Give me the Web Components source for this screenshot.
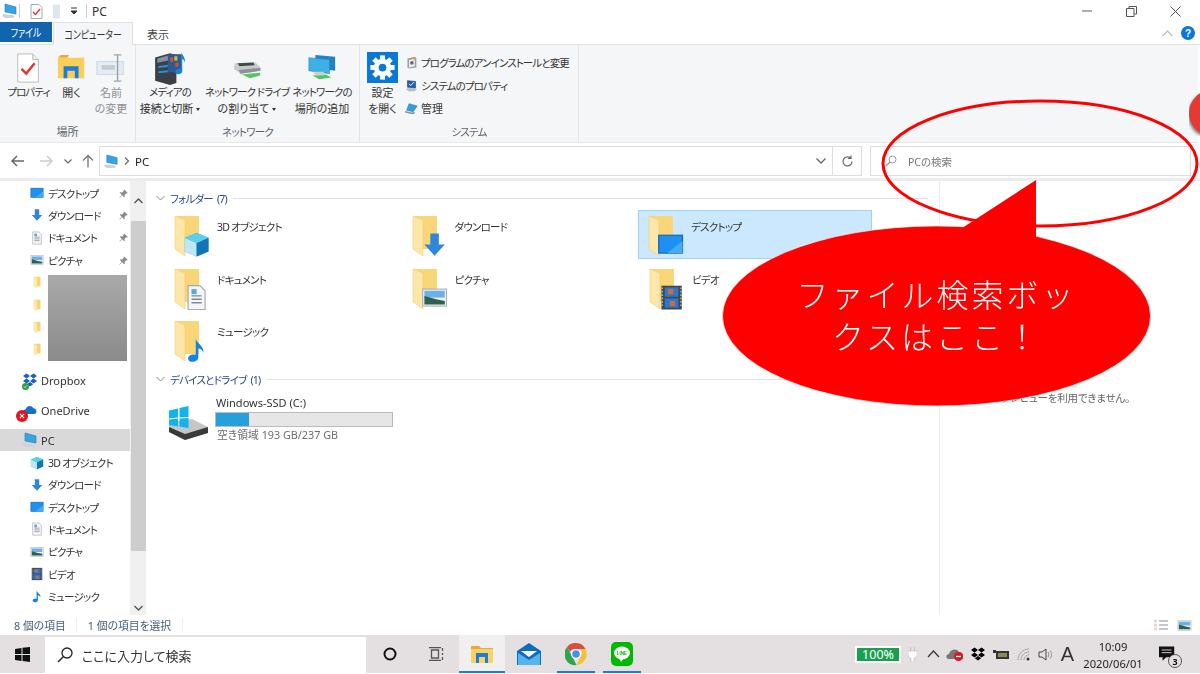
<!DOCTYPE html>
<html lang="ja">
<head>
<meta charset="utf-8">
<title>PC</title>
<style>
  html, body { margin: 0; height: 674px; overflow: hidden; background: #fff; }
  body {
    font-family: "Noto Sans", "Noto Sans CJK JP", sans-serif;
    font-size: 11.5px;
    color: #222;
    font-feature-settings: "palt";
  }
</style>
</head>
<body>
<explorer-app></explorer-app>
<script>
/* Katakana runs much narrower in the original UI font, so squeeze those lines */
const tight = (text, ls = -0.75) => /[ァ-ヶ]/.test(text) ? `font-size:10.5px;letter-spacing:${ls}px` : '';

/* Icon drawings. Small ones use a 16x16 box. */
const gear = () => {
  let teeth = '';
  for (let a = 0; a < 360; a += 45) {
    teeth += `<rect x="13.5" y="3.5" width="5" height="6" fill="#fff" transform="rotate(${a} 16 16)"/>`;
  }
  return `<rect width="32" height="32" fill="#0a78d7"/>${teeth}<circle cx="16" cy="16" r="6.5" fill="none" stroke="#fff" stroke-width="5"/>`;
};

const ICONS = {
  pc: '<path d="M3 1l11 3v7L3 9z" fill="#35a4e6" stroke="#2478b0" stroke-width=".6"/><path d="M1 11l9 1 3 1-2 2H3l-3-2z" fill="#cfd3d6"/>',
  desktop: '<rect x="1" y="2.5" width="14" height="10.5" fill="#1e90f0" stroke="#1467b8" stroke-width=".7"/><path d="M6 13l9-7v7z" fill="#46abf6"/>',
  download: '<path d="M5.5 1.5h5V8H14l-6 6.5L2 8h3.5z" fill="#2f86dc"/>',
  doc: '<path d="M3 1h7l3 3v11H3z" fill="#f4f5f7" stroke="#a7abb0" stroke-width=".7"/><path d="M5 7h6M5 9h6M5 11h6" stroke="#7f8a96" stroke-width=".8"/><path d="M5 3h3v3H5z" fill="#5ba6e0"/>',
  picture: '<rect x="1" y="3" width="14" height="10" fill="#eef1f3" stroke="#a8adb2" stroke-width=".6"/><rect x="2" y="4" width="12" height="4" fill="#6cb2e8"/><path d="M2 7l7 2 5 1v2H2z" fill="#2f5f50"/>',
  video: '<rect x="2" y="1" width="12" height="14" fill="#45484b"/><rect x="4" y="2" width="8" height="5.5" fill="#2a78d0"/><rect x="4" y="8.5" width="8" height="5.5" fill="#2a78d0"/><path d="M6 3h3v3H6zM7 10h3v3H7z" fill="#d6693a"/><path d="M2.5 2v12M13.5 2v12" stroke="#bbb" stroke-width=".8" stroke-dasharray="1 1"/>',
  music: '<path d="M7.5 1.5C8 4.500 12.500 5.500 12 10 11.500 8 10 7.500 9 7.200V12.500c0 1.600-1.600 2.700-3.400 2.700C4 15.200 3 14.300 3 13.200 3 11.700 5 10.700 7.500 11z" fill="#1583e0"/>',
  cube: '<path d="M8 1l7 3v8l-7 3-7-3V4z" fill="#27b5d9"/><path d="M1 4l7 3v8l-7-3z" fill="#bfe6f4"/><path d="M8 7l7-3v8l-7 3z" fill="#1173b8"/><path d="M8 1l7 3-7 3-7-3z" fill="#5cd0ea"/>',
  folder: '<path d="M5 2h7v11H5z" fill="#f8d374"/><path d="M4 2l4 1.500V15l-4-2z" fill="#fde9ae"/>',
  dropbox: '<path d="M4.500 1.500L8 4 4.500 6.500 1 4zM11.500 1.500L15 4l-3.500 2.500L8 4zM4.500 6.500L8 9l-3.500 2.500L1 9zM11.500 6.500L15 9l-3.500 2.500L8 9zM4.800 12.200L8 10l3.200 2.200L8 14.500z" fill="#1462c4"/>',
  onedrive: '<path d="M4 12c-3.500 0-3.500-4.500-.3-4.800C4.800 3 10 3 11.300 6.300c3.500-.3 4.700 5.700.7 5.700z" fill="#1174c9"/>',
  pin: '<path d="M9 2l5 5-1 1-1-.5-2.500 2.500.5 2.500-1 1-3-3L2.500 14 2 13.500 5.500 10l-3-3 1-1 2.500.5L8.500 4 8 3z" fill="#8b8b8b"/>',
  uninstall: '<path d="M3 3l9-2 2 2v11l-9 1.500L3 14z" fill="#9aa0a6"/><path d="M5 5l7-1.500v9L5 14z" fill="#eef0f2"/><circle cx="8.500" cy="8.500" r="2.200" fill="#5a6b7b"/><path d="M10 1.500h3v3h-3z" fill="#d9a441"/>',
  sysprops: '<path d="M1 12l5-1 9 1-3 3H4z" fill="#b9bdc2"/><path d="M3 2l10 1v8L3 10z" fill="#1d5fb0" stroke="#233a5c" stroke-width=".7"/><path d="M5 6l2 2 4-4" fill="none" stroke="#fff" stroke-width="1.200"/>',
  manage: '<path d="M5 2l10 3-5 7-8-2z" fill="#2e9de2" stroke="#1c6a9e" stroke-width=".6"/><path d="M0 11l9 2 3-1v2l-3 1-9-2z" fill="#8f9398"/>'
};

const BIG_ICONS = {
  props: '<path d="M4 1h16l6 6v24H4z" fill="#fff" stroke="#b9b9b9"/><path d="M20 1v6h6" fill="#eee" stroke="#b9b9b9"/><path d="M8 17l5 5 9-11" fill="none" stroke="#e3362c" stroke-width="2.600"/>',
  open: '<path d="M1 5h10l2-3H4z" fill="#e8a93a"/><path d="M1 5h28v22H1z" fill="#fbce5c"/><path d="M7 14h16v13h-4v-8h-8v8H7z" fill="#1c7fd6"/>',
  rename: '<rect x="1" y="9" width="28" height="14" fill="#e4edf5" stroke="#ccd5dd"/><path d="M6 13h14v5H6z" fill="#c5ccd3"/><path d="M19 2h8M19 30h8M23 2v28" stroke="#9aa2a9" stroke-width="1.500" fill="none"/>',
  media: '<path d="M2 6l14-4 6 2v26l-6 2-14-4z" fill="#3b3f46"/><path d="M4 7l11-3v5L4 11z" fill="#8391a0"/><path d="M5 14l9-1v2l-9 1zM5 19l9-1v2l-9 1z" fill="#2d8fd8"/><rect x="14" y="3" width="13" height="17" fill="#2c5b92"/><path d="M16 6h3v4h-3zM21 11h3v4h-3z" fill="#d34d3a"/><path d="M20 5h3v4h-3z" fill="#e0b534"/><path d="M27 1c0 3 4 5 3 10-.5-2-1-3-2.500-3.500V19c0 3-6 4-6.500 1-.3-2.500 3-4 5-3z" fill="#1583e0"/>',
  netdrive: '<path d="M3 11l22-1 6 6v3L10 22 2 17z" fill="#c7cbce"/><path d="M6 11l17-1 1 3-16 1z" fill="#3d4f42"/><path d="M7 21l12 6 11-3v-3L10 23z" fill="#59c46a"/><path d="M7 18l23-2v3l-21 3z" fill="#8c9296"/>',
  netplace: '<path d="M9 2l21 2v15L9 16z" fill="#1e84c5"/><path d="M2 5l22 2v15L2 19z" fill="#3fb0e6" stroke="#2a7fb0" stroke-width=".6"/><path d="M6 24l14-1 6 3-13 2z" fill="#52c45e"/><path d="M8 20h10v4H8z" fill="#c9cfd3"/>',
  gear: gear()
};

class IconGlyph extends HTMLElement {
  connectedCallback() {
    const name = this.getAttribute('name');
    const size = this.getAttribute('size') || 16;
    const big = BIG_ICONS[name];
    const box = big ? 32 : 16;
    this.attachShadow({ mode: 'open' }).innerHTML = `
      <style>:host { display: inline-flex; width: ${size}px; height: ${size}px; flex: none; } svg { display: block; }</style>
      <svg width="${size}" height="${size}" viewBox="0 0 ${box} ${box}">${big || ICONS[name]}</svg>`;
  }
}
customElements.define('icon-glyph', IconGlyph);

/* Large folder with a picture laid over its front */
class FolderIcon extends HTMLElement {
  connectedCallback() {
    const over = this.getAttribute('over');
    this.attachShadow({ mode: 'open' }).innerHTML = `
      <style>:host { display: block; width: 36px; height: 46px; flex: none; } svg { display: block; }</style>
      <svg width="36" height="46" viewBox="0 0 36 46">
        <path d="M3 3h22v33H3z" fill="#f9d678"/>
        <path d="M1 3l10 4v36L1 36z" fill="#fde7a8" stroke="#eec66a" stroke-width=".5"/>
        <g transform="translate(9 18) scale(1.7)">${ICONS[over]}</g>
      </svg>`;
  }
}
customElements.define('folder-icon', FolderIcon);

class TitleBar extends HTMLElement {
  connectedCallback() {
    this.attachShadow({ mode: 'open' }).innerHTML = `
      <style>
        :host { display: flex; align-items: center; height: 22px; background: #fff; padding-left: 2px; font-size: 12px; color: #333; }
        .sep { width: 1px; height: 14px; background: #ccc; }
        .ctl { width: 44px; height: 22px; display: flex; align-items: center; justify-content: center; }
        .grow { flex: 1; }
      </style>
      <icon-glyph name="pc" size="16"></icon-glyph>
      <span class="sep" style="margin-left:1px"></span>
      <svg style="margin-left:10px" width="13" height="15" viewBox="0 0 13 15"><path d="M1 .5h8l3 3v11H1z" fill="#fff" stroke="#aaa"/><path d="M3 8l2.500 2.500L10 5" fill="none" stroke="#e3362c" stroke-width="1.500"/></svg>
      <svg style="margin-left:9px" width="10" height="15" viewBox="0 0 10 15"><path d="M1 .5h7v14H1z" fill="#dfe6f2"/></svg>
      <svg style="margin-left:8px" width="8" height="8" viewBox="0 0 8 8"><path d="M1 1h6M1 4h6l-3 3z" stroke="#333" fill="#333"/></svg>
      <span class="sep" style="margin-left:8px"></span>
      <span style="margin-left:5px">PC</span>
      <span class="grow"></span>
      <span class="ctl"><svg width="11" height="2"><path d="M0 1h10" stroke="#777" stroke-width="1.200"/></svg></span>
      <span class="ctl"><svg width="11" height="11" viewBox="0 0 11 11"><path d="M3 2.500V.5h7.500V8H8.500M.5 2.500H8V10.500H.5z" fill="none" stroke="#555"/></svg></span>
      <span class="ctl"><svg width="11" height="11" viewBox="0 0 11 11"><path d="M.5.500l10 10M10.500.500l-10 10" stroke="#555"/></svg></span>
      <span style="width:3px"></span>`;
  }
}
customElements.define('title-bar', TitleBar);

class RibbonTabs extends HTMLElement {
  connectedCallback() {
    this.attachShadow({ mode: 'open' }).innerHTML = `
      <style>
        :host { display: flex; height: 23px; background: #fff; border-bottom: 1px solid #e0e0e0; box-sizing: border-box; font-size: 11.5px; align-items: flex-start; position: relative; }
        .file { width: 52px; height: 20px; background: #1165ae; color: #fff; display: flex; align-items: center; justify-content: center; }
        .tab { height: 23px; display: flex; align-items: center; justify-content: center; box-sizing: border-box; }
        .on { width: 80px; margin-left: 1px; background: #f5f6f7; border: 1px solid #e0e0e0; border-bottom: 0; color: #333; }
        .off { width: 50px; color: #444; font-size: 11px; }
        b { font-weight: normal; display: inline-block; transform: scaleX(.77); white-space: nowrap; }
        .help { margin-left: auto; display: flex; align-items: center; gap: 8px; height: 22px; padding-right: 5px; }
        .q { width: 14px; height: 14px; border-radius: 50%; background: #0a78d7; color: #fff; font: bold 10px "Liberation Sans", sans-serif; display: flex; align-items: center; justify-content: center; }
      </style>
      <div class="file"><b>ファイル</b></div>
      <div class="tab on"><b>コンピューター</b></div>
      <div class="tab off">表示</div>
      <div class="help">
        <svg width="11" height="7" viewBox="0 0 11 7"><path d="M.5 6l5-5 5 5" fill="none" stroke="#bbb" stroke-width="1.200"/></svg>
        <span class="q">?</span>
      </div>`;
  }
}
customElements.define('ribbon-tabs', RibbonTabs);

class RibbonGroup extends HTMLElement {
  connectedCallback() {
    const label = this.getAttribute('label');
    this.attachShadow({ mode: 'open' }).innerHTML = `
      <style>
        :host { display: flex; flex-direction: column; flex: none; height: 97px; box-sizing: border-box; border-right: 1px solid #e3e4e6; }
        .body { flex: 1; display: flex; }
        .label { height: 22px; text-align: center; color: #5d6168; font-size: 11px; line-height: 24px; }
      </style>
      <div class="body"><slot></slot></div>
      <div class="label" style="${tight(label)}">${label}</div>`;
  }
}
customElements.define('ribbon-group', RibbonGroup);

class RibbonButton extends HTMLElement {
  connectedCallback() {
    const lines = this.getAttribute('text').split('|');
    const caret = this.hasAttribute('caret') ? '<i></i>' : '';
    const dim = this.hasAttribute('dim');
    this.attachShadow({ mode: 'open' }).innerHTML = `
      <style>
        :host { display: flex; flex-direction: column; align-items: center; flex: none; box-sizing: border-box; padding-top: 6px; font-size: 11px; line-height: 15.500px; color: ${dim ? '#8d8f92' : '#333'}; white-space: nowrap; }
        .pic { height: 33px; display: flex; align-items: center; justify-content: center; margin-bottom: 1px; }
        i { display: inline-block; margin-left: 3px; vertical-align: middle; border: 2.500px solid transparent; border-top: 3px solid #333; border-bottom: 0; }
      </style>
      <div class="pic"><icon-glyph name="${this.getAttribute('icon')}" size="${this.getAttribute('size') || 30}"></icon-glyph></div>
      ${lines.map((l, n) => `<div style="${tight(l, -0.9)}">${l}${n === lines.length - 1 ? caret : ''}</div>`).join('')}`;
  }
}
customElements.define('ribbon-button', RibbonButton);

class RibbonBar extends HTMLElement {
  connectedCallback() {
    const small = (icon, text) => `<div class="row"><icon-glyph name="${icon}" size="13"></icon-glyph><span style="${tight(text, -0.9)}">${text}</span></div>`;
    this.attachShadow({ mode: 'open' }).innerHTML = `
      <style>
        :host { display: flex; height: 98px; background: #f5f6f7; margin-right: 2px; box-sizing: border-box; border-bottom: 1px solid #e8e8e8; }
        .small { display: flex; flex-direction: column; padding-top: 8px; gap: 5px; font-size: 11px; color: #333; }
        .row { display: flex; align-items: center; gap: 3px; height: 18px; white-space: nowrap; }
      </style>
      <ribbon-group label="場所" style="width:136px">
        <ribbon-button style="width:57px" icon="props" text="プロパティ"></ribbon-button>
        <ribbon-button style="width:29px" icon="open" text="開く"></ribbon-button>
        <ribbon-button style="width:50px" icon="rename" text="名前|の変更" dim></ribbon-button>
      </ribbon-group>
      <ribbon-group label="ネットワーク" style="width:224px">
        <ribbon-button style="width:68px" icon="media" size="34" text="メディアの|接続と切断" caret></ribbon-button>
        <ribbon-button style="width:86px" icon="netdrive" text="ネットワーク ドライブ|の割り当て" caret></ribbon-button>
        <ribbon-button style="width:64px" icon="netplace" text="ネットワークの|場所の追加"></ribbon-button>
      </ribbon-group>
      <ribbon-group label="システム" style="width:219px">
        <ribbon-button style="width:45px" icon="gear" size="31" text="設定|を開く"></ribbon-button>
        <div class="small">
          ${small('uninstall', 'プログラムのアンインストールと変更')}
          ${small('sysprops', 'システムのプロパティ')}
          ${small('manage', '管理')}
        </div>
      </ribbon-group>`;
  }
}
customElements.define('ribbon-bar', RibbonBar);

class NavBar extends HTMLElement {
  connectedCallback() {
    this.attachShadow({ mode: 'open' }).innerHTML = `
      <style>
        :host { display: flex; align-items: center; height: 38px; padding-top: 1px; box-sizing: border-box; border-bottom: 3px solid #ececec; background: #fff; font-size: 11.5px; }
        .btn { display: flex; justify-content: center; align-items: center; flex: none; }
        .box { display: flex; align-items: center; height: 30px; box-sizing: border-box; border: 1px solid #dedede; }
        .addr { width: 734px; margin-left: 4px; padding: 0 6px 0 4px; }
        .addr .grow { flex: 1; }
        .search { width: 321px; margin-left: 8px; padding-left: 12px; color: #777; font-size: 10.500px; }
      </style>
      <span class="btn" style="width:36px"><svg width="14" height="12" viewBox="0 0 14 12"><path d="M13 6H1.500M6 1L1 6l5 5" fill="none" stroke="#666" stroke-width="1.500"/></svg></span>
      <span class="btn" style="width:20px"><svg width="14" height="12" viewBox="0 0 14 12"><path d="M1 6h11.500M8 1l5 5-5 5" fill="none" stroke="#ccc" stroke-width="1.500"/></svg></span>
      <span class="btn" style="width:24px"><svg width="8" height="5" viewBox="0 0 8 5"><path d="M.5.500L4 4 7.500.500" fill="none" stroke="#666" stroke-width="1.200"/></svg></span>
      <span class="btn" style="width:15px"><svg width="12" height="14" viewBox="0 0 12 14"><path d="M6 13.500V1.500M1 6.500l5-5 5 5" fill="none" stroke="#777" stroke-width="1.300"/></svg></span>
      <div class="box addr">
        <icon-glyph name="pc" size="15"></icon-glyph>
        <svg style="margin:0 5px 0 5px" width="6" height="8" viewBox="0 0 6 8"><path d="M1 .500L4.500 4 1 7.500" fill="none" stroke="#666" stroke-width="1.200"/></svg>
        PC
        <span class="grow"></span>
        <svg width="10" height="6" viewBox="0 0 10 6"><path d="M.5.500L5 5 9.500.500" fill="none" stroke="#666" stroke-width="1.300"/></svg>
      </div>
      <span class="btn" style="width:29px;height:30px;border:1px solid #dedede;border-left:0;box-sizing:border-box"><svg width="13" height="13" viewBox="0 0 13 13"><path d="M11 6.500a4.500 4.500 0 1 1-1.500-3.400M10 .5v3H7" fill="none" stroke="#666" stroke-width="1.200"/></svg></span>
      <div class="box search">
        <svg style="margin:0 11px 0 2px" width="12" height="12" viewBox="0 0 12 12"><circle cx="7.500" cy="4.500" r="3.500" fill="none" stroke="#999"/><path d="M5 7l-4 4" stroke="#999" stroke-width="1.200"/></svg>
        PCの検索
      </div>`;
  }
}
customElements.define('nav-bar', NavBar);

class SideRow extends HTMLElement {
  connectedCallback() {
    const level = this.getAttribute('level') || 1;
    const pad = level == 1 ? 30 : 19;
    const text = this.getAttribute('text') || '';
    const pin = this.hasAttribute('pinned') ? '<icon-glyph class="pin" name="pin" size="11"></icon-glyph>' : '';
    this.attachShadow({ mode: 'open' }).innerHTML = `
      <style>
        :host { display: flex; align-items: center; position: relative; height: ${this.getAttribute('h') || 22.300}px; padding-left: ${pad}px; padding-right: 1px; box-sizing: border-box; font-size: 11px; color: #333; white-space: nowrap; gap: ${level == 1 ? 4 : 3}px; }
        :host([selected]) { background: #d9d9d9; }
        .pin { margin-left: auto; }
        ::slotted(svg) { position: absolute; }
      </style>
      <icon-glyph name="${this.getAttribute('icon')}" size="${level == 1 ? 14 : 16}"></icon-glyph>
      <span style="${tight(text)}">${text}</span>${pin}<slot></slot>`;
  }
}
customElements.define('side-row', SideRow);

class NavPane extends HTMLElement {
  connectedCallback() {
    this.attachShadow({ mode: 'open' }).innerHTML = `
      <style>
        :host { display: flex; width: 146px; flex: none; height: 100%; position: relative; overflow: hidden; }
        .list { width: 130px; padding-top: 1px; }
        .bar { width: 16px; background: #f0f0f0; display: flex; flex-direction: column; align-items: center; }
        .arrow { height: 40px; display: flex; align-items: center; justify-content: center; flex: none; }
        .thumb { width: 15px; height: 330px; background: #cdcdcd; flex: none; }
        .mask { position: absolute; left: 48px; top: 94px; width: 79px; height: 86px; background: linear-gradient(#a9a9a9, #8b8b8b); }
        .gap { height: 8px; }
      </style>
      <div class="list">
        <side-row icon="desktop" text="デスクトップ" pinned></side-row>
        <side-row icon="download" text="ダウンロード" pinned></side-row>
        <side-row icon="doc" text="ドキュメント" pinned></side-row>
        <side-row icon="picture" text="ピクチャ" pinned></side-row>
        <side-row icon="folder"></side-row>
        <side-row icon="folder"></side-row>
        <side-row icon="folder"></side-row>
        <side-row icon="folder"></side-row>
        <div class="gap"></div>
        <side-row level="0" icon="dropbox" text="Dropbox" h="24" style="padding-left:22px">
          <svg style="left:22px;top:15px" width="7" height="7" viewBox="0 0 7 7"><circle cx="3.500" cy="3.500" r="3.500" fill="#2f9e44"/><path d="M2 3.500l1 1 2-2" stroke="#fff" fill="none" stroke-width=".8"/></svg>
        </side-row>
        <side-row level="0" icon="onedrive" text="OneDrive" h="36" style="padding-left:22px">
          <svg style="left:16px;top:18px" width="12" height="12" viewBox="0 0 11 11"><circle cx="5.500" cy="5.500" r="5.500" fill="#e1141e"/><path d="M3.500 3.500l4 4M7.500 3.500l-4 4" stroke="#fff"/></svg>
        </side-row>
        <div style="height:1px"></div>
        <side-row level="0" icon="pc" text="PC" h="22" selected style="padding-left:22px"></side-row>
        <side-row icon="cube" text="3D オブジェクト"></side-row>
        <side-row icon="download" text="ダウンロード"></side-row>
        <side-row icon="desktop" text="デスクトップ"></side-row>
        <side-row icon="doc" text="ドキュメント"></side-row>
        <side-row icon="picture" text="ピクチャ"></side-row>
        <side-row icon="video" text="ビデオ"></side-row>
        <side-row icon="music" text="ミュージック"></side-row>
      </div>
      <div class="bar">
        <div class="arrow"><svg width="9" height="6" viewBox="0 0 9 6"><path d="M.5 5L4.500 1l4 4" fill="none" stroke="#555" stroke-width="1.400"/></svg></div>
        <div class="thumb"></div>
        <div class="arrow" style="flex:1;align-items:flex-end;padding-bottom:4px"><svg width="9" height="6" viewBox="0 0 9 6"><path d="M.5 1l4 4 4-4" fill="none" stroke="#555" stroke-width="1.400"/></svg></div>
      </div>
      <div class="mask"></div>`;
  }
}
customElements.define('nav-pane', NavPane);

class GroupHead extends HTMLElement {
  connectedCallback() {
    this.attachShadow({ mode: 'open' }).innerHTML = `
      <style>
        :host { display: flex; align-items: center; height: 16px; font-size: 10.500px; letter-spacing: -.75px; word-spacing: 2px; color: #2a4a80; gap: 5px; padding-left: 10px; white-space: nowrap; }
        .line { flex: 1; height: 1px; background: #e2e2e2; margin-left: 1px; }
      </style>
      <svg width="9" height="6" viewBox="0 0 9 6"><path d="M.5 1l4 4 4-4" fill="none" stroke="#888"/></svg>
      <span><slot></slot></span><span class="line"></span>`;
  }
}
customElements.define('group-head', GroupHead);

class FolderItem extends HTMLElement {
  connectedCallback() {
    this.attachShadow({ mode: 'open' }).innerHTML = `
      <style>
        :host { display: flex; width: 234px; height: 49px; box-sizing: border-box; border: 1px solid transparent; padding: 2px 0 0 9px; gap: 7px; font-size: 10.500px; letter-spacing: -.75px; color: #333; white-space: nowrap; }
        :host([selected]) { background: #cce8ff; border-color: #99d1ff; }
        span { padding-top: 6px; }
      </style>
      <folder-icon over="${this.getAttribute('over')}"></folder-icon>
      <span><slot></slot></span>`;
  }
}
customElements.define('folder-item', FolderItem);

class DriveItem extends HTMLElement {
  connectedCallback() {
    this.attachShadow({ mode: 'open' }).innerHTML = `
      <style>
        :host { display: flex; padding-left: 22px; gap: 6px; margin-top: 8px; font-size: 11px; color: #333; }
        .pic { margin-top: 10px; }
        .info { display: flex; flex-direction: column; }
        .name { line-height: 15px; padding-left: 1px; }
        .track { width: 176px; height: 13px; margin-top: 2px; background: #e6e6e6; border: 1px solid #bcbcbc; }
        .fill { width: 33px; height: 100%; background: #26a0da; }
        .free { color: #6d6d6d; line-height: 16px; padding-left: 2px; font-size: 10.800px; }
      </style>
      <svg class="pic" width="41" height="36" viewBox="0 0 41 36">
        <path d="M1 17l23-3 16 8v6L17 35 1 27z" fill="#c4c6c8"/>
        <path d="M1 22l16 7 23-7v6L17 35 1 27z" fill="#3a3a3a"/>
        <path d="M1 5.500l9-2v9l-9 1zM11.500 3l9-2v11l-9 .5zM1 14.500l9-1v8l-9-1.500zM11.500 13.500l9-.5v10l-9-1.500z" fill="#12b3ec"/>
      </svg>
      <div class="info">
        <div class="name">Windows-SSD (C:)</div>
        <div class="track"><div class="fill"></div></div>
        <div class="free">空き領域 193 GB/237 GB</div>
      </div>`;
  }
}
customElements.define('drive-item', DriveItem);

class ContentPane extends HTMLElement {
  connectedCallback() {
    this.attachShadow({ mode: 'open' }).innerHTML = `
      <style>
        :host { display: block; flex: 1; height: 100%; background: #fff; padding: 9px 11px 0 0; box-sizing: border-box; }
        .grid { display: grid; grid-template-columns: repeat(3, 237.500px); grid-auto-rows: 52.500px; padding: 4px 0 0 18px; margin-bottom: 3.500px; }
      </style>
      <group-head>フォルダー (7)</group-head>
      <div class="grid">
        <folder-item over="cube">3D オブジェクト</folder-item>
        <folder-item over="download">ダウンロード</folder-item>
        <folder-item over="desktop" selected style="margin-left:-1px">デスクトップ</folder-item>
        <folder-item over="doc">ドキュメント</folder-item>
        <folder-item over="picture">ピクチャ</folder-item>
        <folder-item over="video">ビデオ</folder-item>
        <folder-item over="music">ミュージック</folder-item>
      </div>
      <group-head>デバイスとドライブ (1)</group-head>
      <drive-item></drive-item>`;
  }
}
customElements.define('content-pane', ContentPane);

class PreviewPane extends HTMLElement {
  connectedCallback() {
    this.attachShadow({ mode: 'open' }).innerHTML = `
      <style>
        :host { display: block; width: 261px; flex: none; height: 100%; box-sizing: border-box; border-left: 1px solid #ececec; padding: 209px 70px 0 0; text-align: right; font-size: 10.500px; color: #666; white-space: nowrap; letter-spacing: -.2px; }
      </style>
      プレビューを利用できません。`;
  }
}
customElements.define('preview-pane', PreviewPane);

class StatusBar extends HTMLElement {
  connectedCallback() {
    this.attachShadow({ mode: 'open' }).innerHTML = `
      <style>
        :host { display: flex; align-items: center; height: 20px; padding: 0 8px 0 14px; font-size: 10.800px; color: #44607c; background: #fff; }
        .sep { width: 1px; height: 14px; background: #eee; margin: 0 10.500px; }
        .grow { flex: 1; }
      </style>
      <span>8 個の項目</span><span class="sep"></span><span>1 個の項目を選択</span><span class="sep"></span>
      <span class="grow"></span>
      <svg width="14" height="12" viewBox="0 0 14 12"><path d="M5 2h9M5 6h9M5 10h9" stroke="#8b8f94"/><path d="M0 .5h3v3H0zM0 4.500h3v3H0zM0 8.500h3v3H0z" fill="#e7d9d0"/></svg>
      <icon-glyph style="margin-left:9px" name="picture" size="15"></icon-glyph>`;
  }
}
customElements.define('status-bar', StatusBar);

class TaskBar extends HTMLElement {
  connectedCallback() {
    this.attachShadow({ mode: 'open' }).innerHTML = `
      <style>
        :host { display: flex; height: 38px; background: #e4dfe1; color: #111; font-size: 13px; }
        .start { width: 45px; display: flex; align-items: center; padding-left: 15px; box-sizing: border-box; }
        .search { width: 321px; background: #fff; display: flex; align-items: center; padding-left: 11px; box-sizing: border-box; margin-top: 2px; gap: 8px; color: #333; }
        .slot { width: 46px; display: flex; align-items: center; justify-content: center; box-sizing: border-box; flex: none; }
        .run { border-bottom: 2px solid #1a7fd4; padding-top: 2px; margin: 0 4px; width: 38px; }
        .act { background: #f1eff0; margin: 0; width: 46px; }
        .tray { margin-left: auto; display: flex; align-items: center; height: 38px; }
        .tray > * { flex: none; }
        .t { display: flex; justify-content: center; align-items: center; }
        .batt { width: 46px; height: 17px; box-sizing: border-box; background: #1a9f50; border: 2px solid #fff; color: #fff; font-size: 12.500px; display: flex; align-items: center; justify-content: center; }
        .clock { width: 68px; text-align: center; font-size: 11.200px; line-height: 17px; color: #222; margin-top: 2px; }
        .note { width: 41px; height: 38px; position: relative; }
        .num { position: absolute; left: 21px; top: 19px; width: 14px; height: 14px; box-sizing: border-box; border-radius: 50%; background: #e4dfe1; border: 1px solid #555; font-size: 9px; display: flex; align-items: center; justify-content: center; font-weight: bold; }
      </style>
      <div class="start"><svg width="15" height="15" viewBox="0 0 15 15"><path d="M0 2l6.500-1v6H0zM7.500 .800L15 0v7H7.500zM0 8h6.500v6L0 13zM7.500 8H15v7l-7.500-1z" fill="#111"/></svg></div>
      <div class="search">
        <svg width="18" height="18" viewBox="0 0 18 18"><circle cx="11" cy="7" r="5" fill="none" stroke="#222" stroke-width="1.300"/><path d="M7.500 10.500L2 16" stroke="#222" stroke-width="1.500"/></svg>
        ここに入力して検索
      </div>
      <div class="slot" style="width:47px"><svg width="14" height="14" viewBox="0 0 14 14"><circle cx="7" cy="7" r="5.500" fill="none" stroke="#111" stroke-width="2"/></svg></div>
      <div class="slot" style="width:46px"><svg width="16" height="14" viewBox="0 0 16 14"><path d="M3.500 3h7v8h-7zM1 .5h12M1 13.500h12" fill="none" stroke="#555" stroke-width="1.300"/><path d="M14.500 1v3M14.500 6v2M14.500 10v3" stroke="#555" stroke-width="1.300"/></svg></div>
      <div class="slot run act"><svg width="22" height="20" viewBox="0 0 22 20"><path d="M0 2h8l2 2h12v2H0z" fill="#e8aa3a"/><path d="M0 5h22v14H0z" fill="#fdd264"/><path d="M5 9h12v10h-3v-6H8v6H5z" fill="#1c7fd6"/></svg></div>
      <div class="slot" style="width:48px"><svg width="24" height="22" viewBox="0 0 24 22"><path d="M12 0l12 8v14H0V8z" fill="#0f6cbd"/><path d="M1 10l11 7 11-7v12H1z" fill="#53b4ee"/><path d="M4 8h16L12 14z" fill="#fff"/></svg></div>
      <div class="slot run"><svg width="22" height="24" viewBox="0 0 22 24"><path d="M11 1a10.500 11 0 0 1 9.500 6H10a5 5 0 0 0-5 3L2 5a10.500 11 0 0 1 9-4z" fill="#dd4b3e"/><path d="M2 5l5.500 10 4 8A10.500 11 0 0 1 2 5z" fill="#2ea44f"/><path d="M20.500 7a10.500 11 0 0 1-9 16L16 14a5 5 0 0 0-1-7z" fill="#f2c230"/><circle cx="11" cy="12" r="5" fill="#fff"/><circle cx="11" cy="12" r="3.800" fill="#4a8fe8"/></svg></div>
      <div class="slot run"><svg width="22" height="24" viewBox="0 0 22 24"><rect width="22" height="24" rx="5" fill="#00b900"/><ellipse cx="11" cy="11" rx="8" ry="6.500" fill="#fff"/><path d="M8 16l2 4 3-4z" fill="#fff"/><text x="11" y="12.800" text-anchor="middle" font-size="4.500" font-weight="bold" fill="#00b900" font-family="Liberation Sans, sans-serif">LINE</text></svg></div>
      <div class="tray">
        <div class="batt">100%</div>
        <div class="t" style="width:23px"><svg width="9" height="15" viewBox="0 0 9 15"><path d="M2.500 0v4M6.500 0v4M0 4h9v4c0 2-2 3-3 3v4H3v-4c-1 0-3-1-3-3z" fill="#fff" stroke="#999" stroke-width=".4"/></svg></div>
        <div class="t" style="width:19px"><svg width="13" height="8" viewBox="0 0 13 8"><path d="M1 7l5.500-6L12 7" fill="none" stroke="#333" stroke-width="1.200"/></svg></div>
        <div class="t" style="width:24px"><svg width="18" height="14" viewBox="0 0 18 14"><path d="M3 12c-4 0-3-5 0-5 1-5 8-6 10-2 3 0 4 2 4 4v3z" fill="#777"/><circle cx="12.500" cy="9.500" r="4.500" fill="#e1141e"/><path d="M10 9.500h5" stroke="#fff" stroke-width="1.300"/></svg></div>
        <div class="t" style="width:22px"><icon-glyph name="dropbox" size="16" style="filter:brightness(0)"></icon-glyph></div>
        <div class="t" style="width:23px"><svg width="16" height="10" viewBox="0 0 16 10"><path d="M0 1h3v3H0z" fill="#333"/><rect x="3" y="2" width="13" height="8" fill="#333"/><rect x="5" y="4" width="9" height="4" fill="#8d8a5a"/></svg></div>
        <div class="t" style="width:23px"><svg width="14" height="13" viewBox="0 0 14 13"><path d="M1 12A11 11 0 0 1 12 1M4 12a8 8 0 0 1 8-8M7 12a5 5 0 0 1 5-5" fill="none" stroke="#888" stroke-dasharray="1.500 .7"/><circle cx="11" cy="11" r="1.500" fill="#333"/></svg></div>
        <div class="t" style="width:21px"><svg width="15" height="13" viewBox="0 0 15 13"><path d="M1 4h3l4-3v11L4 9H1z" fill="none" stroke="#444"/><path d="M10 4c1 1 1 4 0 5M12 2.500c2 2 2 6 0 8" fill="none" stroke="#888"/></svg></div>
        <div class="t" style="width:23px;font-size:20px;font-family:'Liberation Sans',sans-serif;color:#333">A</div>
        <div class="clock">10:09<br>2020/06/01</div>
        <div class="t note"><svg width="17" height="16" viewBox="0 0 19 17"><path d="M0 0h17v12H8l-4 4v-4H0z" fill="#111"/><path d="M3 4h11M3 7h11" stroke="#e4dfe1"/></svg><span class="num">3</span></div>
        <div style="width:12px;height:38px"></div>
      </div>`;
  }
}
customElements.define('task-bar', TaskBar);

/* Red annotation laid over the screenshot */
class CalloutNote extends HTMLElement {
  connectedCallback() {
    this.attachShadow({ mode: 'open' }).innerHTML = `
      <style>
        :host { display: block; position: absolute; left: 0; top: 0; width: 1200px; height: 674px; pointer-events: none; }
        svg { position: absolute; left: 0; top: 0; }
        .msg { position: absolute; left: 723px; top: 274px; width: 427px; text-align: center; color: #fff; font-size: 32px; line-height: 42px; letter-spacing: 3px; font-weight: 300; font-feature-settings: normal; }
        .dot { position: absolute; left: 1189px; top: 90px; width: 11px; height: 46px; overflow: hidden; }
        .dot i { display: block; width: 46px; height: 46px; border-radius: 50%; background: #e53935; box-shadow: -1px 2px 3px rgba(0,0,0,.5); }
      </style>
      <div class="dot"><i></i></div>
      <svg width="1200" height="674">
        <ellipse cx="1040" cy="163.500" rx="157" ry="62.500" fill="none" stroke="#f00" stroke-width="3"/>
        <ellipse cx="936.500" cy="316" rx="214" ry="90" fill="#f00" stroke="#fff" stroke-width=".6"/>
        <path d="M956 232L1036 180V240z" fill="#f00"/>
      </svg>
      <div class="msg">ファイル検索ボッ<br>クスはここ！</div>`;
  }
}
customElements.define('callout-note', CalloutNote);

class ExplorerApp extends HTMLElement {
  connectedCallback() {
    this.attachShadow({ mode: 'open' }).innerHTML = `
      <style>
        :host { display: flex; flex-direction: column; position: relative; width: 1200px; height: 674px; overflow: hidden; filter: blur(.45px); }
        .main { display: flex; height: 434px; }
      </style>
      <title-bar></title-bar>
      <ribbon-tabs></ribbon-tabs>
      <ribbon-bar></ribbon-bar>
      <nav-bar></nav-bar>
      <div class="main">
        <nav-pane></nav-pane>
        <content-pane></content-pane>
        <preview-pane></preview-pane>
      </div>
      <status-bar></status-bar>
      <task-bar></task-bar>
      <callout-note></callout-note>`;
  }
}
customElements.define('explorer-app', ExplorerApp);
</script>
</body>
</html>
